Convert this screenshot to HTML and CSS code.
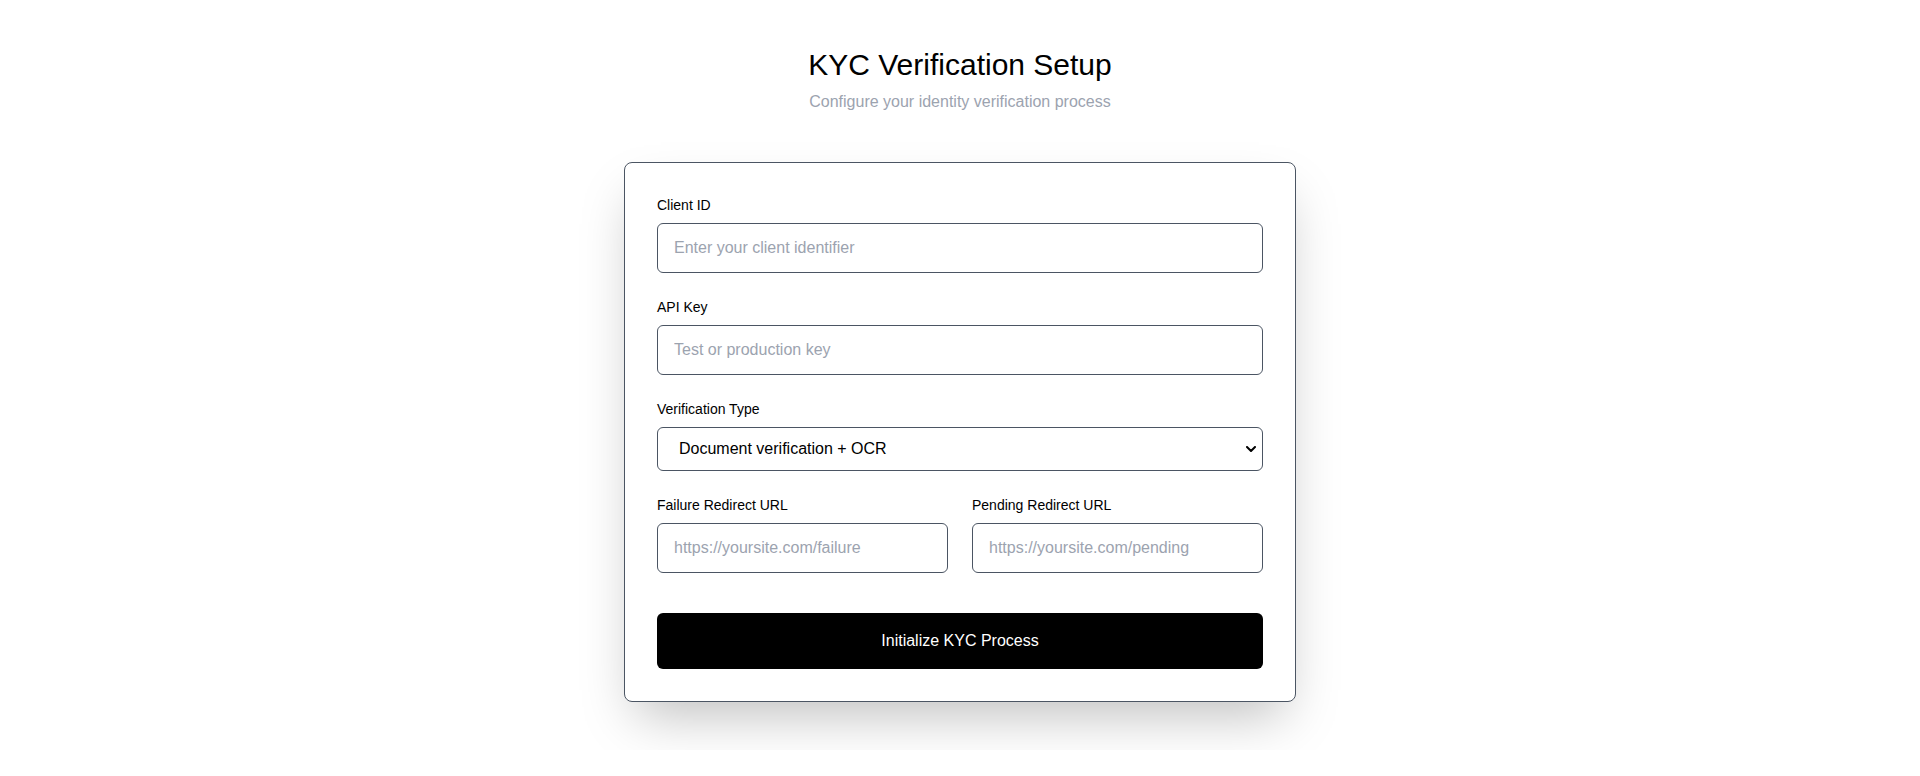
FILE: index.html
```html
<!DOCTYPE html>
<html lang="en">
<head>
<meta charset="utf-8">
<title>KYC Verification Setup</title>
<link rel="stylesheet" href="styles.css">
</head>
<body>
<main class="page">
  <header class="header">
    <h1 class="title">KYC Verification Setup</h1>
    <p class="subtitle">Configure your identity verification process</p>
  </header>
  <form class="card">
    <div class="field">
      <label class="label" for="client">Client ID</label>
      <input class="control" id="client" type="text" placeholder="Enter your client identifier">
    </div>
    <div class="field">
      <label class="label" for="apikey">API Key</label>
      <input class="control" id="apikey" type="text" placeholder="Test or production key">
    </div>
    <div class="field">
      <label class="label" for="vtype">Verification Type</label>
      <div class="select-wrap">
        <select class="control select" id="vtype">
          <option>Document verification + OCR</option>
          <option>Document verification</option>
          <option>Biometric verification</option>
        </select>
        <svg class="chevron" width="10" height="6" viewBox="0 0 10 6" aria-hidden="true"><path d="M1 1l4 4 4-4" fill="none" stroke="#000" stroke-width="2" stroke-linecap="round" stroke-linejoin="round"/></svg>
      </div>
    </div>
    <div class="row">
      <div class="cell">
        <label class="label" for="fail">Failure Redirect URL</label>
        <input class="control" id="fail" type="text" placeholder="https://yoursite.com/failure">
      </div>
      <div class="cell">
        <label class="label" for="pend">Pending Redirect URL</label>
        <input class="control" id="pend" type="text" placeholder="https://yoursite.com/pending">
      </div>
    </div>
    <button class="submit" type="button">Initialize KYC Process</button>
  </form>
</main>
</body>
</html>
```
FILE: styles.css
```css
html, body {
  margin: 0;
  padding: 0;
  background: #ffffff;
}

body {
  font-family: "Liberation Sans", Arial, sans-serif;
  color: #000000;
}

.page {
  padding: 47px 16px 48px;
}

.header {
  text-align: center;
  margin-bottom: 48px;
}

.title {
  margin: 0 0 7px;
  font-size: 30px;
  line-height: 36px;
  font-weight: 400;
  color: #000000;
}

.subtitle {
  margin: 0;
  font-size: 16px;
  line-height: 24px;
  color: #9ca3af;
}

.card {
  box-sizing: border-box;
  width: 672px;
  margin: 0 auto;
  padding: 32px;
  background: #ffffff;
  border: 1px solid #4b5563;
  border-radius: 8px;
  box-shadow: 0 25px 50px -12px rgba(0, 0, 0, 0.25);
}

.field {
  margin-bottom: 24px;
}

.label {
  display: block;
  margin-bottom: 8px;
  font-size: 14px;
  line-height: 20px;
  color: #000000;
}

.control {
  display: block;
  box-sizing: border-box;
  width: 100%;
  margin: 0;
  padding: 12px 16px;
  font-family: "Liberation Sans", Arial, sans-serif;
  font-size: 16px;
  line-height: 24px;
  color: #000000;
  background: #ffffff;
  border: 1px solid #4b5563;
  border-radius: 6px;
  outline: none;
}

.control::placeholder {
  color: #9ca3af;
  opacity: 1;
}

.select-wrap {
  position: relative;
}

.select {
  -webkit-appearance: none;
  appearance: none;
  height: 44px;
  padding: 0 36px 0 21px;
  line-height: 42px;
  color: #000000;
}

.chevron {
  position: absolute;
  right: 7px;
  top: 50%;
  transform: translateY(-50%);
  pointer-events: none;
}

.row {
  display: grid;
  grid-template-columns: 1fr 1fr;
  gap: 24px;
  margin-bottom: 40px;
}

.submit {
  display: block;
  width: 100%;
  height: 56px;
  margin: 0;
  padding: 0 16px;
  font-family: "Liberation Sans", Arial, sans-serif;
  font-size: 16px;
  color: #ffffff;
  background: #000000;
  border: none;
  border-radius: 6px;
  cursor: pointer;
}
```
